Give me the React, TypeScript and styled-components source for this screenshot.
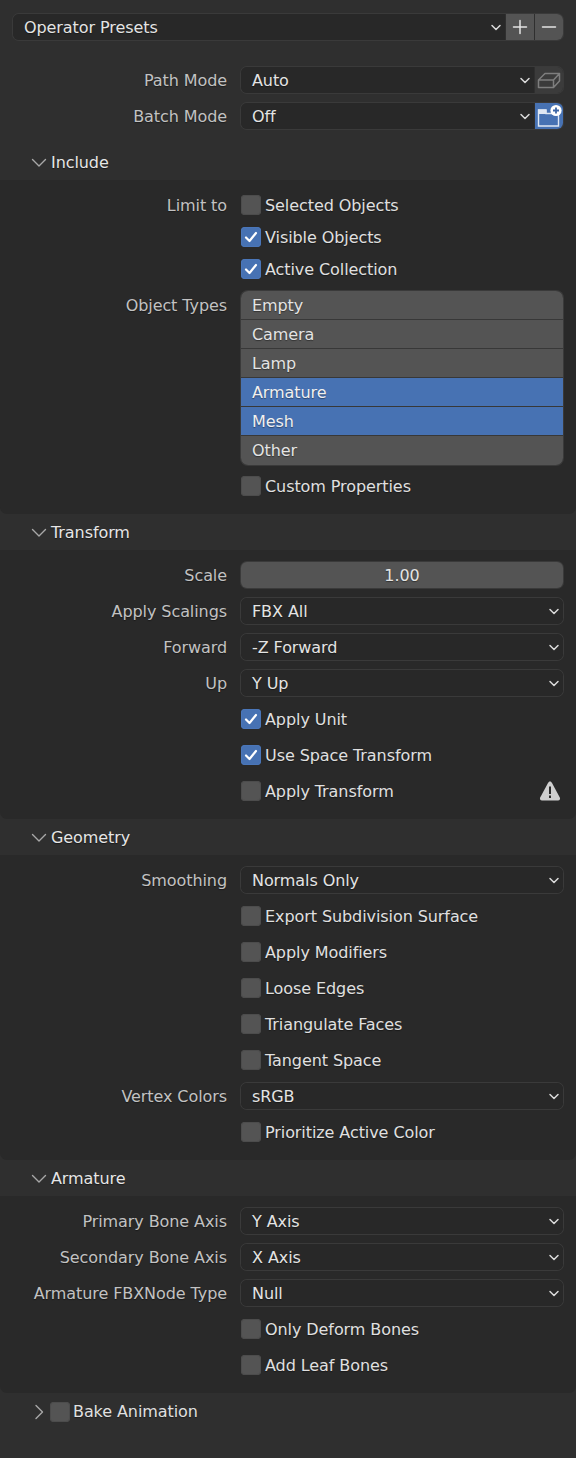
import React from "react";
import styled, { createGlobalStyle } from "styled-components";

const Global = createGlobalStyle`
  html, body { margin: 0; padding: 0; background: #2f2f2f; }
  body { font-family: "DejaVu Sans", "Liberation Sans", sans-serif; font-size: 16px; letter-spacing: -0.08px; color: #e4e4e4; }
  * { box-sizing: border-box; }
`;

const Page = styled.div`
  width: 576px;
  height: 1458px;
  overflow: hidden;
  background: #2f2f2f;
  padding-top: 14px;
`;

const Joined = styled.div`
  display: flex;
  height: 26px;
  border-radius: 6px;
  box-shadow: 0 0 0 1px #3a3a3a;
  overflow: hidden;
`;

const PresetRow = styled(Joined)`
  margin: 0 13px;
`;

const Select = styled.div`
  flex: 1;
  min-width: 0;
  display: flex;
  align-items: center;
  justify-content: space-between;
  background: #282828;
  padding: 0 3px 0 11px;
  color: #e4e4e4;
  text-shadow: 0 1px 1px rgba(0,0,0,.4);
`;

const SideButton = styled.div<{ $tone?: "grey" | "dim" | "blue" }>`
  width: 29px;
  flex: none;
  display: flex;
  align-items: center;
  justify-content: center;
  border-left: 1px solid #2f2f2f;
  background: ${p => (p.$tone === "blue" ? "#4772b3" : p.$tone === "dim" ? "#3b3b3b" : "#545454")};
`;

const Top = styled.div`
  display: flex;
  flex-direction: column;
  margin-top: 22px;
  margin-bottom: 11px;
`;

const Row = styled.div<{ $h?: number; $top?: boolean }>`
  display: grid;
  grid-template-columns: 227px 1fr;
  column-gap: 14px;
  align-items: ${p => (p.$top ? "start" : "center")};
  height: ${p => p.$h ?? 36}px;
  padding-right: 13px;
`;

const Label = styled.div<{ $top?: boolean }>`
  text-align: right;
  color: #c2c2c2;
  white-space: nowrap;
  text-shadow: 0 1px 1px rgba(0,0,0,.4);
  margin-top: ${p => (p.$top ? 11 : 0)}px;
`;

const Header = styled.div<{ $bake?: boolean }>`
  display: flex;
  align-items: center;
  height: 35px;
  padding-left: 31px;
  color: #e6e6e6;
  text-shadow: 0 1px 1px rgba(0,0,0,.5);
  gap: ${p => (p.$bake ? 3 : 4)}px;
`;

const Body = styled.div<{ $compact?: boolean }>`
  background: #292929;
  border-radius: 0 0 7px 7px;
  padding-top: ${p => (p.$compact ? 9 : 7)}px;
  padding-bottom: ${p => (p.$compact ? 12 : 10)}px;
  margin-bottom: 1px;
`;

const Box = styled.span<{ $on?: boolean }>`
  width: 20px;
  height: 20px;
  flex: none;
  border-radius: 4px;
  background: ${p => (p.$on ? "#4772b3" : "#545454")};
  box-shadow: inset 0 0 0 1px ${p => (p.$on ? "#4a76b9" : "#4c4c4c")};
  display: inline-flex;
  align-items: center;
  justify-content: center;
`;

const CheckLine = styled.div<{ $tight?: boolean }>`
  display: flex;
  align-items: center;
  gap: ${p => (p.$tight ? 3 : 4)}px;
  color: #e0e0e0;
  white-space: nowrap;
  text-shadow: 0 1px 1px rgba(0,0,0,.4);
`;

const Alert = styled.div`
  margin-left: auto;
  margin-right: 2px;
  display: flex;
`;

const List = styled.div`
  display: flex;
  flex-direction: column;
  margin-top: 6px;
  border-radius: 7px;
  overflow: hidden;
  box-shadow: 0 0 0 1px #3a3a3a;
`;

const ListItem = styled.div<{ $on?: boolean }>`
  height: 29px;
  display: flex;
  align-items: center;
  padding-left: 11px;
  background: ${p => (p.$on ? "#4772b3" : "#545454")};
  color: ${p => (p.$on ? "#f0f0f0" : "#e4e4e4")};
  border-bottom: 1px solid #383838;
  text-shadow: 0 1px 1px rgba(0,0,0,.4);
  &:last-child { border-bottom: 0; }
`;

const Slider = styled.div`
  height: 26px;
  border-radius: 6px;
  background: #545454;
  box-shadow: 0 0 0 1px #3a3a3a;
  display: flex;
  align-items: center;
  justify-content: center;
  color: #e4e4e4;
  text-shadow: 0 1px 1px rgba(0,0,0,.4);
`;

const Chevron = () => (
  <svg width="12" height="12" viewBox="0 0 12 12" fill="none" stroke="#dcdcdc" strokeWidth="1.5" strokeLinecap="round" strokeLinejoin="round">
    <path d="M2 4.5 L6 8.5 L10 4.5" />
  </svg>
);

const Disclosure = ({ open = true }: { open?: boolean }) => (
  <svg width="16" height="16" viewBox="0 0 16 16" fill="none" stroke="#a8a8a8" strokeWidth="1.4" strokeLinecap="round" strokeLinejoin="round">
    {open ? <path d="M1.5 4.5 L8 11 L14.5 4.5" /> : <path d="M5 1.5 L11.5 8 L5 14.5" />}
  </svg>
);

const Check = () => (
  <svg width="14" height="14" viewBox="0 0 14 14" fill="none" stroke="#fff" strokeWidth="2.2" strokeLinecap="round" strokeLinejoin="round">
    <path d="M2 7.5 L5.5 11 L12 3" />
  </svg>
);

const Plus = () => (
  <svg width="16" height="16" viewBox="0 0 16 16" stroke="#e4e4e4" strokeWidth="1.5" strokeLinecap="round">
    <path d="M8 1.5 V14.5 M1.5 8 H14.5" />
  </svg>
);

const Minus = () => (
  <svg width="16" height="16" viewBox="0 0 16 16" stroke="#e4e4e4" strokeWidth="1.5" strokeLinecap="round">
    <path d="M1.5 8 H14.5" />
  </svg>
);

const CubeIcon = () => (
  <svg width="24" height="20" viewBox="0 0 24 20" fill="none" stroke="#7e7e7e" strokeWidth="1.5" strokeLinejoin="round">
    <path d="M1.5 10 L8 3.5 H22.5 V11 L16.5 17.5 H1.5 Z M1.5 10 H16.5 L22.5 3.5 M16.5 10 V17.5" />
  </svg>
);

const FolderPlus = () => (
  <svg width="28" height="26" viewBox="0 0 28 26" fill="none">
    <path d="M3.5 7 H11 V10.5 H23.5 V23 H3.5 Z" fill="#4772b3" stroke="#dfe7f3" strokeWidth="1.4" />
    <path d="M3 6.5 H11.5 V11 H3 Z" fill="#dfe7f3" />
    <circle cx="21" cy="7.5" r="5.6" fill="#fff" />
    <path d="M21 4.5 V10.5 M18 7.5 H24" stroke="#3d66a6" strokeWidth="1.8" />
  </svg>
);

const Warning = () => (
  <svg width="22" height="22" viewBox="0 0 22 22">
    <path d="M11 1.5 C10 1.5 9.5 2.2 9 3 L1.2 17.5 C.5 19 1.2 20.5 3 20.5 H19 C20.8 20.5 21.5 19 20.8 17.5 L13 3 C12.5 2.2 12 1.5 11 1.5 Z" fill="#cfcfcf" />
    <path d="M10 6.5 H12 V14 H10 Z M10 15.5 H12 V18 H10 Z" fill="#2a2a2a" />
  </svg>
);

const Drop = ({ label, value, side }: { label: string; value: string; side?: React.ReactNode }) => (
  <Row>
    <Label>{label}</Label>
    <Joined>
      <Select>
        {value}
        <Chevron />
      </Select>
      {side}
    </Joined>
  </Row>
);

const Tick = ({ label, on, h, alert, children }: { label?: string; on?: boolean; h?: number; alert?: boolean; children: React.ReactNode }) => (
  <Row $h={h}>
    <Label>{label}</Label>
    <CheckLine>
      <Box $on={on}>{on && <Check />}</Box>
      {children}
      {alert && (
        <Alert>
          <Warning />
        </Alert>
      )}
    </CheckLine>
  </Row>
);

const Panel = ({ title, compact, children }: { title: string; compact?: boolean; children: React.ReactNode }) => (
  <>
    <Header>
      <Disclosure />
      {title}
    </Header>
    <Body $compact={compact}>{children}</Body>
  </>
);

const types: [string, boolean][] = [
  ["Empty", false],
  ["Camera", false],
  ["Lamp", false],
  ["Armature", true],
  ["Mesh", true],
  ["Other", false],
];

export default function App() {
  return (
    <Page>
      <Global />
      <PresetRow>
        <Select>
          Operator Presets
          <Chevron />
        </Select>
        <SideButton>
          <Plus />
        </SideButton>
        <SideButton>
          <Minus />
        </SideButton>
      </PresetRow>

      <Top>
        <Drop label="Path Mode" value="Auto" side={<SideButton $tone="dim"><CubeIcon /></SideButton>} />
        <Drop label="Batch Mode" value="Off" side={<SideButton $tone="blue"><FolderPlus /></SideButton>} />
      </Top>

      <Panel title="Include" compact>
        <Tick label="Limit to" h={32}>Selected Objects</Tick>
        <Tick on h={32}>Visible Objects</Tick>
        <Tick on h={32}>Active Collection</Tick>
        <Row $h={185} $top>
          <Label $top>Object Types</Label>
          <List>
            {types.map(([t, on]) => (
              <ListItem key={t} $on={on}>{t}</ListItem>
            ))}
          </List>
        </Row>
        <Tick h={32}>Custom Properties</Tick>
      </Panel>

      <Panel title="Transform">
        <Row>
          <Label>Scale</Label>
          <Slider>1.00</Slider>
        </Row>
        <Drop label="Apply Scalings" value="FBX All" />
        <Drop label="Forward" value="-Z Forward" />
        <Drop label="Up" value="Y Up" />
        <Tick on>Apply Unit</Tick>
        <Tick on>Use Space Transform</Tick>
        <Tick alert>Apply Transform</Tick>
      </Panel>

      <Panel title="Geometry">
        <Drop label="Smoothing" value="Normals Only" />
        <Tick>Export Subdivision Surface</Tick>
        <Tick>Apply Modifiers</Tick>
        <Tick>Loose Edges</Tick>
        <Tick>Triangulate Faces</Tick>
        <Tick>Tangent Space</Tick>
        <Drop label="Vertex Colors" value="sRGB" />
        <Tick>Prioritize Active Color</Tick>
      </Panel>

      <Panel title="Armature">
        <Drop label="Primary Bone Axis" value="Y Axis" />
        <Drop label="Secondary Bone Axis" value="X Axis" />
        <Drop label="Armature FBXNode Type" value="Null" />
        <Tick>Only Deform Bones</Tick>
        <Tick>Add Leaf Bones</Tick>
      </Panel>

      <Header $bake>
        <Disclosure open={false} />
        <CheckLine $tight>
          <Box />
          Bake Animation
        </CheckLine>
      </Header>
    </Page>
  );
}
